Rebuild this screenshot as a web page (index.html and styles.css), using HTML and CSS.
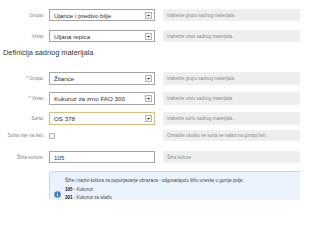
FILE: index.html
```html
<!DOCTYPE html>
<html lang="sr">
<head>
<meta charset="utf-8">
<title>Definicija sadnog materijala</title>
<link rel="stylesheet" href="styles.css">
</head>
<body>
<div class="page">
  <h2 class="title title-cut">Grupa i vrsta sadnog materijala</h2>

  <div class="row r1">
    <div class="label">Grupa:</div>
    <div class="field select"><span class="val">Ujarice i predivo bilje</span><span class="btn"><svg viewBox="0 0 7 7" width="7" height="7"><path d="M2 3h3L3.5 4.6z" fill="#222"/></svg></span></div>
    <div class="hint">Izaberite grupu sadnog materijala.</div>
  </div>

  <div class="row r2">
    <div class="label">Vrsta:</div>
    <div class="field select"><span class="val">Uljana repica</span><span class="btn"><svg viewBox="0 0 7 7" width="7" height="7"><path d="M2 3h3L3.5 4.6z" fill="#222"/></svg></span></div>
    <div class="hint">Izaberite vrstu sadnog materijala.</div>
  </div>

  <h2 class="title section">Definicija sadnog materijala</h2>

  <div class="row r3 tall">
    <div class="label">* Grupa:</div>
    <div class="field select"><span class="val">Žitarice</span><span class="btn"><svg viewBox="0 0 7 7" width="7" height="7"><path d="M2 3h3L3.5 4.6z" fill="#222"/></svg></span></div>
    <div class="hint">Izaberite grupu sadnog materijala.</div>
  </div>

  <div class="row r4 tall">
    <div class="label">* Vrsta:</div>
    <div class="field select"><span class="val">Kukuruz za zrno FAO 300</span><span class="btn"><svg viewBox="0 0 7 7" width="7" height="7"><path d="M2 3h3L3.5 4.6z" fill="#222"/></svg></span></div>
    <div class="hint">Izaberite vrstu sadnog materijala.</div>
  </div>

  <div class="row r5 tall">
    <div class="label">Sorta:</div>
    <div class="field select focus"><span class="val">OS 378</span><span class="btn"><svg viewBox="0 0 7 7" width="7" height="7"><path d="M2 3h3L3.5 4.6z" fill="#222"/></svg></span></div>
    <div class="hint">Izaberite sortu sadnog materijala.</div>
  </div>

  <div class="row r6">
    <div class="label">Sorta nije na listi:</div>
    <div class="field plain"><span class="check"></span></div>
    <div class="hint">Označite ukoliko se sorta ne nalazi na gornjoj listi.</div>
  </div>

  <div class="row r7">
    <div class="label">Šifra kulture:</div>
    <div class="field input"><span class="val">105</span></div>
    <div class="hint">Šifra kulture</div>
  </div>

  <div class="info">
    <div class="info-icon"><svg viewBox="0 0 8 8" width="7" height="7"><circle cx="4" cy="4" r="3.7" fill="#3d7cc4"/><circle cx="4" cy="2.3" r="0.6" fill="#fff"/><rect x="3.5" y="3.3" width="1" height="2.8" fill="#fff"/></svg></div>
    <div class="info-text">
      <div>Šifre i nazivi kultura za popunjavanje obrazaca - odgovarajuću šifru unesite u gornje polje:</div>
      <div><b>105</b> - Kukuruz</div>
      <div><b>301</b> - Kukuruz za silažu</div>
      <div><b>302</b> - Kukuruz šećerac</div>
    </div>
  </div>
</div>
</body>
</html>
```

FILE: styles.css
```css
html, body {
  margin: 0;
  padding: 0;
  background: #ffffff;
  overflow: hidden;
}

body {
  width: 300px;
  height: 200px;
  font-family: "Liberation Sans", Arial, sans-serif;
}

.page {
  width: 300px;
}

.title {
  font-weight: normal;
  font-size: 7.4px;
  line-height: 10px;
  height: 10px;
  color: #333333;
  white-space: nowrap;
  margin: 0 0 0 3px;
}

.title-cut {
  margin-top: -9px;
  margin-left: 10px;
}

.section {
  margin-top: 6px;
}

.row {
  display: flex;
  height: 12px;
  white-space: nowrap;
}

.row.tall {
  height: 13px;
}

.r1 { margin-top: 8px; }
.r2 { margin-top: 9px; }
.r3 { margin-top: 14px; }
.r4 { margin-top: 7px; }
.r5 { margin-top: 7px; }
.r6 { margin-top: 5px; height: 11px; }
.r7 { margin-top: 10px; }

.label {
  width: 44px;
  flex: none;
  display: flex;
  align-items: center;
  justify-content: flex-end;
  font-size: 4.8px;
  color: #828282;
}

.field {
  width: 106px;
  flex: none;
  margin-left: 5px;
  box-sizing: border-box;
  display: flex;
  align-items: center;
  padding-left: 4px;
  font-size: 6.2px;
  color: #2e2e2e;
}

.select,
.input {
  border: 1px solid #a5a5a5;
  background: #ffffff;
}

.select.focus {
  border-color: #d4c27c;
  box-shadow: 0 0 1px #e8dca8;
}

.plain {
  padding-left: 0;
}

.btn {
  margin-left: auto;
  margin-right: 2px;
  width: 7px;
  height: 7px;
  box-sizing: border-box;
  border: 1px solid #b4b4b4;
  background: #f3f3f3;
  display: flex;
  align-items: center;
  justify-content: center;
}

.btn svg {
  display: block;
  flex: none;
}

.check {
  width: 6px;
  height: 6px;
  box-sizing: border-box;
  border: 1px solid #b8b8b8;
  background: #f4f4f4;
}

.hint {
  margin-left: 8px;
  width: 160px;
  flex: none;
  box-sizing: border-box;
  background: #eeeeee;
  display: flex;
  align-items: center;
  padding-left: 4px;
  font-size: 4.5px;
  color: #8a8a8a;
}

.info {
  margin: 8px 0 0 49px;
  width: 270px;
  box-sizing: border-box;
  border: 1px solid #c6d8ea;
  border-radius: 3px;
  background: #eaf2fb;
  display: flex;
  padding: 5px 0 6px 0;
}

.info-icon {
  width: 7px;
  height: 7px;
  flex: none;
  align-self: center;
  margin: 0 4px 0 4px;
}

.info-icon svg {
  display: block;
}

.info-text {
  font-size: 4.5px;
  line-height: 8.5px;
  color: #444444;
  white-space: nowrap;
}

.info-text b {
  color: #222222;
}
```
